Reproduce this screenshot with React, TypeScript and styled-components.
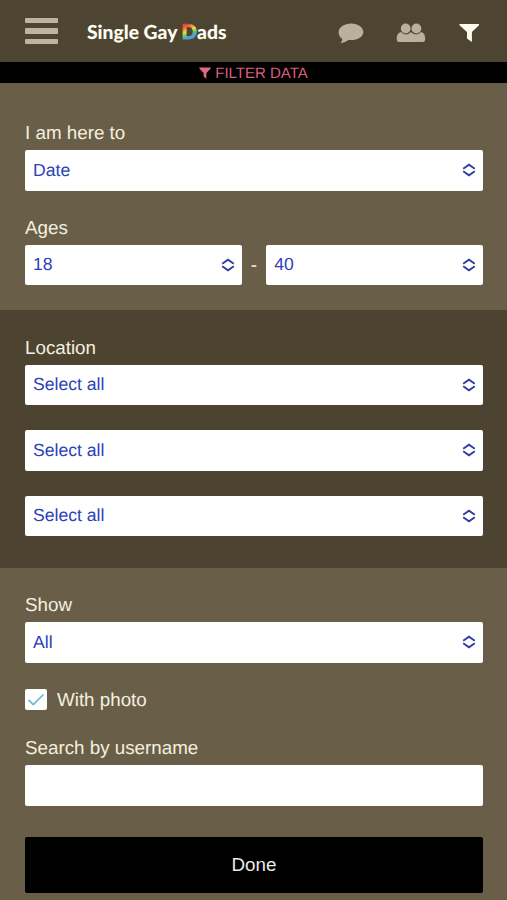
import React from "react";
import styled, { createGlobalStyle } from "styled-components";

const GlobalStyle = createGlobalStyle`
  *, *::before, *::after { box-sizing: border-box; }
  body { margin: 0; background: #695f49; }
`;

const Page = styled.div`
  width: 100%;
  height: 900px;
  overflow: hidden;
  background: #695f49;
  color: #f4efdf;
  font-family: "Liberation Sans", Arial, sans-serif;
  font-size: 18.8px;
  text-rendering: geometricPrecision;
`;

const Header = styled.header`
  display: flex;
  align-items: center;
  height: 62px;
  padding: 0 27px 0 25px;
  background: #4d4532;
`;

const MenuButton = styled.button`
  display: flex;
  flex-direction: column;
  gap: 5px;
  width: 33px;
  padding: 0;
  border: 0;
  background: none;
`;

const MenuLine = styled.span`
  height: 5.2px;
  border-radius: 1px;
  background: #bfb59f;
`;

const Logo = styled.div`
  margin: 2px 0 0 29px;
  font-family: Lato, sans-serif;
  font-size: 19.3px;
  font-weight: 900;
  line-height: 24px;
  white-space: nowrap;
  color: #fffdf0;
`;

const RainbowLetter = styled.span`
  color: transparent;
  font-size: 20.5px;
  -webkit-text-stroke: 0.9px transparent;
  background: linear-gradient(155deg, #e9503a 24%, #f4963a 35%, #e8df4b 45%, #62c866 56%, #45a4dd 66%, #8b78e0 78%);
  -webkit-background-clip: text;
  background-clip: text;
`;

const HeaderIcons = styled.nav`
  display: flex;
  align-items: center;
  margin: 4px 0 0 auto;
`;

const HeaderIcon = styled.svg<{ $gap?: number; $active?: boolean }>`
  display: block;
  margin-left: ${(p) => p.$gap ?? 0}px;
  fill: ${(p) => (p.$active ? "#fffdef" : "#b9b19b")};
`;

const TitleBar = styled.div`
  display: flex;
  align-items: center;
  justify-content: center;
  gap: 4px;
  height: 21px;
  padding-top: 1px;
  background: #000;
  color: #d95f7d;
  font-size: 15px;
`;

const Section = styled.section<{ $dark?: boolean; $height: number; $top: number }>`
  height: ${(p) => p.$height}px;
  padding: ${(p) => p.$top}px 24px 0 25px;
  background: ${(p) => (p.$dark ? "#4c4431" : "#695f49")};
`;

const Label = styled.label<{ $top?: number }>`
  display: block;
  height: 29px;
  margin-top: ${(p) => p.$top ?? 0}px;
  line-height: 24px;
`;

const SelectBox = styled.div<{ $top?: number }>`
  display: flex;
  flex: 1;
  align-items: center;
  justify-content: space-between;
  height: 40.5px;
  margin-top: ${(p) => p.$top ?? 0}px;
  padding: 0 7px 0 8px;
  border-radius: 2px;
  background: #fff;
  color: #2c42b6;
  font-size: 17.6px;
`;

const Arrows = styled.svg`
  display: block;
  fill: none;
  stroke: #303b9f;
  stroke-width: 1.9;
`;

const AgeRow = styled.div`
  display: flex;
  align-items: center;
`;

const Dash = styled.span`
  width: 24.5px;
  text-align: center;
`;

const CheckRow = styled.label`
  display: flex;
  align-items: center;
  gap: 10px;
  height: 21px;
  margin-top: 26.5px;
`;

const CheckBox = styled.span`
  display: flex;
  align-items: center;
  justify-content: center;
  width: 22px;
  height: 21px;
  border-radius: 2px;
  background: #fff;
`;

const SearchInput = styled.input`
  display: block;
  width: 100%;
  height: 40.5px;
  padding: 0 8px;
  border: 0;
  border-radius: 2px;
  background: #fff;
`;

const DoneButton = styled.button`
  display: block;
  width: 100%;
  height: 55.5px;
  margin-top: 31.5px;
  padding: 0;
  border: 0;
  border-radius: 2px;
  background: #000;
  color: #eceae6;
  font: inherit;
`;

function Select({ value, top }: { value: string; top?: number }) {
  return (
    <SelectBox $top={top}>
      <span>{value}</span>
      <Arrows width="14" height="14" viewBox="0 0 14 14">
        <path d="M1.2 5.7 7 1.7 12.8 5.7M1.2 8.3 7 12.3 12.8 8.3" />
      </Arrows>
    </SelectBox>
  );
}

export default function App() {
  return (
    <>
      <GlobalStyle />
      <Page>
        <Header>
          <MenuButton aria-label="Menu">
            <MenuLine />
            <MenuLine />
            <MenuLine />
          </MenuButton>
          <Logo>
            Single Gay <RainbowLetter>D</RainbowLetter>ads
          </Logo>
          <HeaderIcons>
            <HeaderIcon width="26" height="21" viewBox="0 0 26 21">
              <path d="M13.2.5C20 .5 25.3 4.2 25.3 8.9s-5.3 8.1-12.1 8.1c-1 0-1.7-.1-2.5-.2C8.5 18.6 5.8 20 2.4 20.2c1-1 1.7-2.2 1.9-4.2C2 14.5.6 12 .6 9 .6 4.2 6.3.5 13.2.5Z" />
            </HeaderIcon>
            <HeaderIcon $gap={32} width="30" height="20" viewBox="0 0 30 20">
              <circle cx="9.7" cy="5.5" r="4.9" />
              <circle cx="20.4" cy="5.5" r="4.9" />
              <path d="M5.4 9.1c1.2 1.5 2.6 2.3 4.4 2.3 2.2 0 3.9-.9 5.2-2.4 1.3 1.5 3.1 2.4 5.4 2.4 1.8 0 3.2-.8 4.4-2.3 2.8.3 4.4 2.9 4.4 6.9 0 2-.8 3-2.400 3H3.100c-1.600 0-2.400-1-2.400-3 0-4 1.800-6.600 4.700-6.900Z" />
            </HeaderIcon>
            <HeaderIcon $gap={33} $active width="21" height="20" viewBox="0 0 21 20">
              <path d="M.5.9h19.5v1.400L12.900 9v9.900L8 15.400V9L.5 2.300Z" />
            </HeaderIcon>
          </HeaderIcons>
        </Header>
        <TitleBar>
          <svg width="12" height="12" viewBox="0 0 12 12" fill="#e76886">
            <path d="M.3.6h11.400v1L7.400 5.900v5.800L4.600 9.500V5.900L.3 1.600Z" />
          </svg>
          <span>FILTER DATA</span>
        </TitleBar>
        <Section $height={227} $top={38}>
          <Label>I am here to</Label>
          <Select value="Date" />
          <Label $top={25}>Ages</Label>
          <AgeRow>
            <Select value="18" />
            <Dash>-</Dash>
            <Select value="40" />
          </AgeRow>
        </Section>
        <Section $dark $height={258} $top={25.5}>
          <Label>Location</Label>
          <Select value="Select all" />
          <Select value="Select all" top={25} />
          <Select value="Select all" top={25.2} />
        </Section>
        <Section $height={332} $top={25}>
          <Label>Show</Label>
          <Select value="All" />
          <CheckRow>
            <CheckBox>
              <svg width="18" height="14" viewBox="0 0 18 14" fill="none" stroke="#65bdd0" strokeWidth="1.7">
                <path d="M1.5 6.8 6.3 11.5 16.5 1.5" />
              </svg>
            </CheckBox>
            <span>With photo</span>
          </CheckRow>
          <Label $top={26}>Search by username</Label>
          <SearchInput aria-label="Search by username" />
          <DoneButton>Done</DoneButton>
        </Section>
      </Page>
    </>
  );
}
